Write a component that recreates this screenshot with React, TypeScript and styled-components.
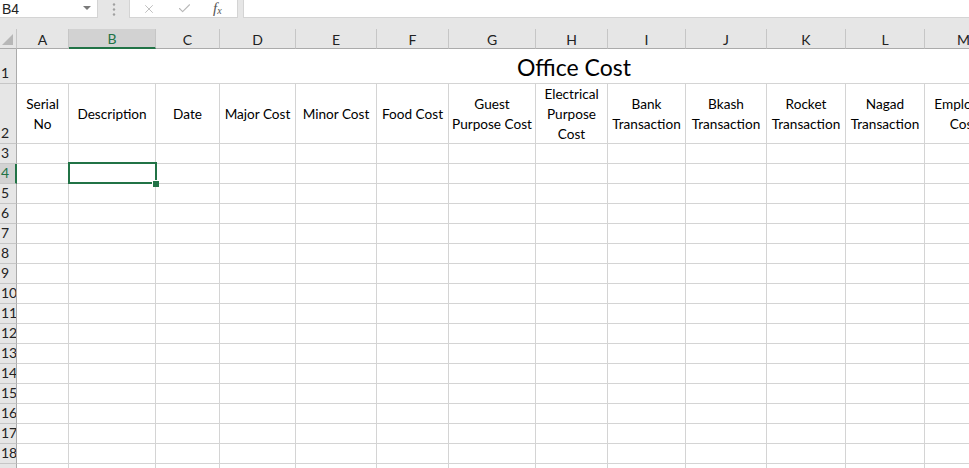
import { createGlobalStyle, styled } from "styled-components";
import { X, Check } from "lucide-react";

const GREEN = "#217346";
const GRID = "#d4d4d4";
const HEAD_BG = "#e6e6e6";
const HEAD_LINE = "#c6c6c6";

const columns = [
  { key: "A", width: 52 },
  { key: "B", width: 87 },
  { key: "C", width: 64 },
  { key: "D", width: 76 },
  { key: "E", width: 81 },
  { key: "F", width: 72 },
  { key: "G", width: 87 },
  { key: "H", width: 72 },
  { key: "I", width: 78 },
  { key: "J", width: 81 },
  { key: "K", width: 79 },
  { key: "L", width: 79 },
  { key: "M", width: 78 },
  { key: "N", width: 64 },
  { key: "O", width: 64 },
];

const headings = [
  "Serial No",
  "Description",
  "Date",
  "Major Cost",
  "Minor Cost",
  "Food Cost",
  "Guest Purpose Cost",
  "Electrical Purpose Cost",
  "Bank Transaction",
  "Bkash Transaction",
  "Rocket Transaction",
  "Nagad Transaction",
  "Employee Cost",
  "",
  "",
];

const emptyRows = Array.from({ length: 18 }, (_, i) => i + 3);

const selected = { col: "B", row: 4 };

const GlobalStyle = createGlobalStyle`
  html, body {
    margin: 0;
    padding: 0;
    overflow: hidden;
    background: ${HEAD_BG};
    font-family: Lato, "Noto Sans", sans-serif;
  }
`;

const Page = styled.div`
  display: flex;
  flex-direction: column;
  width: 969px;
  height: 468px;
  overflow: hidden;
`;

const FormulaBar = styled.div`
  display: flex;
  align-items: flex-start;
  height: 29px;
  flex-shrink: 0;
`;

const NameBox = styled.div`
  position: relative;
  display: flex;
  align-items: center;
  box-sizing: border-box;
  width: 98px;
  height: 18px;
  padding-left: 2px;
  background: #fff;
  border-right: 1px solid ${GRID};
  border-bottom: 1px solid ${GRID};
  font-family: "Liberation Sans", Arial, sans-serif;
  font-size: 14px;
  color: #222;
`;

const Caret = styled.span`
  position: absolute;
  right: 6px;
  top: 6px;
  width: 0;
  height: 0;
  border-left: 4px solid transparent;
  border-right: 4px solid transparent;
  border-top: 4px solid #7a7a7a;
`;

const Grip = styled.div`
  display: flex;
  justify-content: center;
  width: 31px;
  height: 18px;
  padding-top: 3px;
  box-sizing: border-box;
`;

const FuncBox = styled.div`
  display: flex;
  align-items: center;
  box-sizing: border-box;
  width: 109px;
  height: 18px;
  background: #fff;
  border-left: 1px solid ${GRID};
  border-right: 1px solid ${GRID};
  border-bottom: 1px solid ${GRID};
  color: #b8b8b8;
`;

const FuncIcon = styled.span<{ $left: number }>`
  display: flex;
  align-items: center;
  margin-left: ${(p) => p.$left}px;
`;

const Fx = styled.span`
  margin-left: 21px;
  font-family: "Liberation Serif", "Times New Roman", serif;
  font-style: italic;
  font-size: 15px;
  color: #555;
  line-height: 1;

  sub {
    font-size: 10px;
    vertical-align: -1px;
  }
`;

const FormulaInput = styled.div`
  flex: 1;
  height: 18px;
  margin-left: 5px;
  box-sizing: border-box;
  background: #fff;
  border-left: 1px solid ${GRID};
  border-bottom: 1px solid ${GRID};
`;

const Sheet = styled.div`
  display: grid;
  grid-template-columns: 17px ${columns.map((c) => `${c.width}px`).join(" ")};
  grid-template-rows: 20px 35px 60px;
  grid-auto-rows: 20px;
  width: max-content;
  background: #fff;
`;

const Corner = styled.div`
  position: relative;
  box-sizing: border-box;
  background: ${HEAD_BG};
  border-right: 1px solid ${HEAD_LINE};
  border-bottom: 1px solid #ababab;

  &::after {
    content: "";
    position: absolute;
    right: 3px;
    bottom: 3px;
    width: 0;
    height: 0;
    border-left: 11px solid transparent;
    border-bottom: 11px solid #b7b7b7;
  }
`;

const ColHead = styled.div<{ $active?: boolean }>`
  display: flex;
  align-items: center;
  justify-content: center;
  box-sizing: border-box;
  padding-top: 1px;
  background: ${(p) => (p.$active ? "#d2d2d2" : HEAD_BG)};
  border-right: 1px solid ${HEAD_LINE};
  border-bottom: ${(p) => (p.$active ? `2px solid ${GREEN}` : "1px solid #ababab")};
  font-size: 14px;
  color: ${(p) => (p.$active ? GREEN : "#222")};
`;

const RowHead = styled.div<{ $active?: boolean }>`
  display: flex;
  align-items: flex-end;
  box-sizing: border-box;
  padding: 0 0 1px 1px;
  background: ${(p) => (p.$active ? "#d2d2d2" : HEAD_BG)};
  border-right: ${(p) => (p.$active ? `2px solid ${GREEN}` : `1px solid #ababab`)};
  border-bottom: 1px solid ${HEAD_LINE};
  font-size: 14px;
  line-height: 18px;
  color: ${(p) => (p.$active ? GREEN : "#222")};
  overflow: hidden;
  white-space: nowrap;
`;

const Title = styled.div`
  grid-column: 2 / -1;
  display: flex;
  align-items: flex-end;
  justify-content: center;
  box-sizing: border-box;
  padding-bottom: 2px;
  border-bottom: 1px solid ${GRID};
  font-size: 23px;
  color: #000;
`;

const Cell = styled.div<{ $selected?: boolean }>`
  position: relative;
  display: flex;
  align-items: center;
  justify-content: center;
  box-sizing: border-box;
  border-right: 1px solid ${GRID};
  border-bottom: 1px solid ${GRID};
  overflow: hidden;

  ${(p) =>
    p.$selected &&
    `
    overflow: visible;
    z-index: 2;
    &::before {
      content: "";
      position: absolute;
      left: -1px;
      top: -2px;
      right: -2px;
      bottom: -1px;
      border: 2px solid ${GREEN};
    }
    &::after {
      content: "";
      position: absolute;
      right: -4px;
      bottom: -4px;
      width: 6px;
      height: 6px;
      background: ${GREEN};
      border-left: 1px solid #fff;
      border-top: 1px solid #fff;
    }
  `}
`;

const Heading = styled.span`
  display: block;
  min-width: 0;
  padding: 0 2px;
  font-size: 13.6px;
  line-height: 20px;
  text-align: center;
  color: #000;
`;

function GripDots() {
  return (
    <svg width="4" height="13" viewBox="0 0 4 13">
      {[1.5, 6.5, 11.5].map((cy) => (
        <circle key={cy} cx="2" cy={cy} r="1.2" fill="#a0a0a0" />
      ))}
    </svg>
  );
}

export default function App() {
  return (
    <Page>
      <GlobalStyle />
      <FormulaBar>
        <NameBox>
          B4
          <Caret />
        </NameBox>
        <Grip>
          <GripDots />
        </Grip>
        <FuncBox>
          <FuncIcon $left={12}>
            <X size={14} strokeWidth={1.5} />
          </FuncIcon>
          <FuncIcon $left={21}>
            <Check size={15} strokeWidth={1.7} />
          </FuncIcon>
          <Fx>
            f<sub>x</sub>
          </Fx>
        </FuncBox>
        <FormulaInput />
      </FormulaBar>

      <Sheet>
        <Corner />
        {columns.map((c) => (
          <ColHead key={c.key} $active={c.key === selected.col}>
            {c.key}
          </ColHead>
        ))}

        <RowHead>1</RowHead>
        <Title>Office Cost</Title>

        <RowHead>2</RowHead>
        {columns.map((c, i) => (
          <Cell key={c.key}>
            <Heading>{headings[i]}</Heading>
          </Cell>
        ))}

        {emptyRows.map((r) => [
          <RowHead key={`h${r}`} $active={r === selected.row}>
            {r}
          </RowHead>,
          ...columns.map((c) => (
            <Cell
              key={`${c.key}${r}`}
              $selected={c.key === selected.col && r === selected.row}
            />
          )),
        ])}
      </Sheet>
    </Page>
  );
}
